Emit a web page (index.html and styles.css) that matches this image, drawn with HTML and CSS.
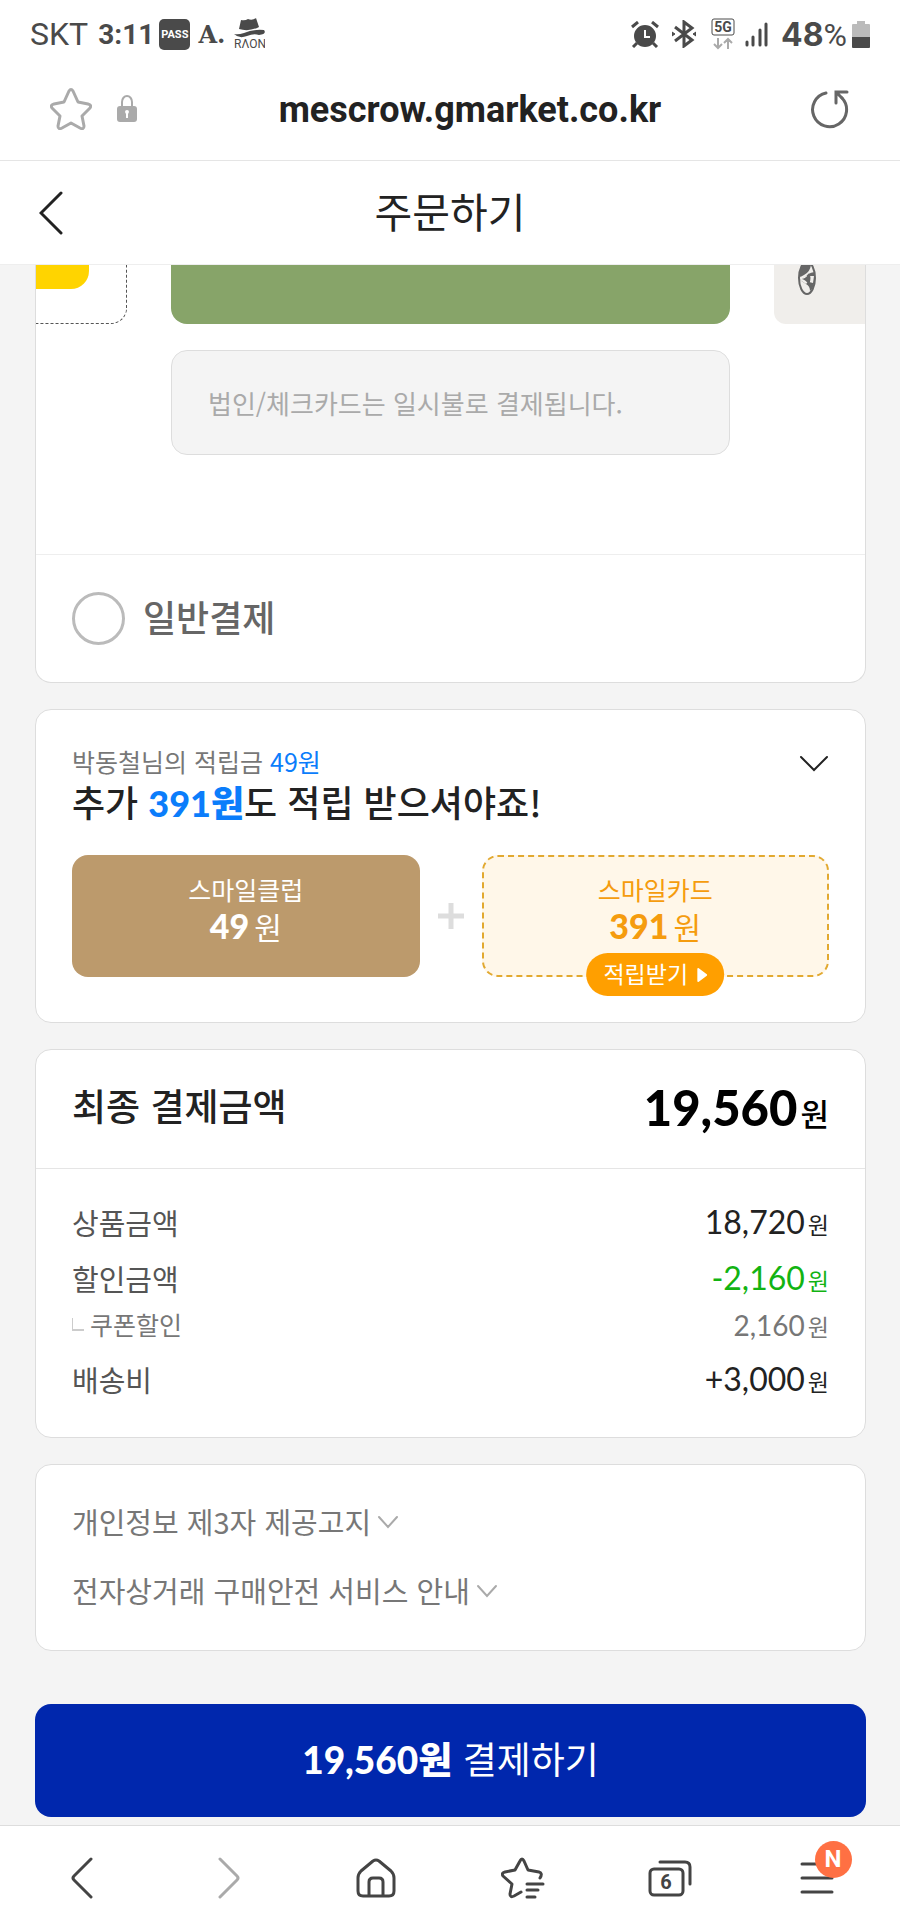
FILE: index.html
```html
<!DOCTYPE html>
<html lang="ko">

<head>
  <meta charset="utf-8">
  <meta name="viewport" content="width=device-width">
  <title>주문하기</title>
  <link rel="stylesheet" href="styles.css">
</head>
<body>
  <!-- 상태바 -->
  <div class="status">
    <span class="carrier">SKT</span>
    <span class="clock">3:11</span>
    <span class="pass">PASS</span>
    <span class="adot">A.</span>
    <svg class="raon" width="31" height="34" viewBox="0 0 31 34">
      <path fill="#4a4a4a" d="M7 3Q11 4 14 2Q18 4 22 1L25 10Q15 15 5 12ZM0 17Q4 18 10 16Q19 12 30 13Q33 17 25 18Q20 16 13 19Q5 22 0 17Z"/>
      <text x="0" y="31" font-family="Roboto" font-size="12" fill="#4a4a4a">RΛON</text>
    </svg>
    <div class="status-right">
      <svg width="28" height="27" viewBox="0 0 28 27" fill="none" stroke="#4a4a4a">
        <circle cx="14" cy="15" r="10" fill="#4a4a4a" stroke-width="2"/>
        <path d="M1 6L7 1M21 1l6 5M6 22l-4 4M22 22l4 4" stroke-width="3"/>
        <path d="M14 9v7h5" stroke="#fff" stroke-width="2"/>
      </svg>
      <svg class="bluetooth" width="24" height="28" viewBox="0 0 24 28" fill="none" stroke="#4a4a4a" stroke-width="3">
        <path d="M3 7l17 13-8 6V2l8 6L3 21"/>
        <path d="M0 12l3 2-3 2zM24 12l-3 2 3 2z" fill="#4a4a4a" stroke-width="1"/>
      </svg>
      <svg class="network" width="24" height="32" viewBox="0 0 24 32" fill="none">
        <rect x="1" y="1" width="22" height="16" rx="2" stroke="#4a4a4a"/>
        <text x="12" y="14" text-anchor="middle" font-family="Roboto" font-size="14" font-weight="700" fill="#4a4a4a">5G</text>
        <path d="M7 20v10M3 26l4 4 4-4M17 31V21M13 25l4-4 4 4" stroke="#aaa" stroke-width="2"/>
      </svg>
      <svg class="signal" width="23" height="25" viewBox="0 0 23 25" stroke="#4a4a4a" stroke-width="3" stroke-linecap="round">
        <path d="M2 20v3M8 15v8M15 8v15M21 2v21"/>
      </svg>
      <span class="percent"><b>48</b>%</span>
      <svg width="18" height="27" viewBox="0 0 18 27">
        <path fill="#bbb" d="M5 0h8v3h4q1 0 1 1v12H0V4q0-1 1-1h4z"/>
        <path fill="#4a4a4a" d="M0 16h18v10q0 1-1 1H1q-1 0-1-1z"/>
      </svg>
    </div>
  </div>

  <!-- 주소창 -->
  <div class="address">
    <button class="icon-btn" aria-label="북마크">
      <svg width="42" height="42" viewBox="0 0 42 42" fill="none" stroke="#aaa" stroke-width="3" stroke-linejoin="round">
        <path d="M19 3Q21 0 23 3L28 14L38 16Q42 17 40 20L32 28L34 38Q34 42 30 40L21 35L12 40Q8 42 8 38L10 28L2 20Q0 17 4 16L14 14Z"/>
      </svg>
    </button>
    <svg class="lock" width="20" height="28" viewBox="0 0 20 28">
      <path d="M5 13V7a5 6 0 0 1 10 0v6" fill="none" stroke="#aaa" stroke-width="2"/>
      <rect y="11" width="20" height="16" rx="3" fill="#aaa"/>
      <path d="M8 17a2 2 0 1 1 4 0l-1 2v4H9v-4z" fill="#fff"/>
    </svg>
    <span class="url">mescrow.gmarket.co.kr</span>
    <button class="icon-btn" aria-label="새로고침">
      <svg width="38" height="40" viewBox="0 0 38 40" fill="none" stroke="#666" stroke-width="3" stroke-linecap="round">
        <path d="M15 4A17 17 0 1 0 31 9"/>
        <path d="M25 14V3h11M26 4l5 5"/>
      </svg>
    </button>
  </div>

  <header class="header">
    <button class="icon-btn" aria-label="뒤로">
      <svg width="24" height="44" viewBox="0 0 24 44" fill="none" stroke="#222" stroke-width="3" stroke-linecap="round">
        <path d="M22 2L2 22l20 20"/>
      </svg>
    </button>
    <h1>주문하기</h1>
  </header>

  <main class="content">
    <!-- 결제수단 -->
    <section class="card pay">
      <div class="slider">
        <div class="slide add"><div class="plus-box"></div></div>
        <div class="slide green"></div>
        <div class="slide hyundai">
          <svg width="20" height="31" viewBox="0 0 20 31">
            <ellipse cx="10" cy="13" rx="8" ry="16" fill="none" stroke="#666" stroke-width="2"/>
            <path d="M6 0h8q-1 7-7 10-3 2-5 2 0-7 4-12zM3 15q3-1 7-5 4-3 8-3l-1 12q-1 5-4 7 0-5-4-7-3-2-6-4z" fill="#666"/>
            <path d="M3 15l7-5 1 7-2 2zM13 11h4l-1 7-4-1z" fill="#f0eeeb"/>
            <path d="M5 14q5-1 7-6 3 4 0 12-3-5-7-6z" fill="#666"/>
          </svg>
        </div>
      </div>
      <p class="notice">법인/체크카드는 일시불로 결제됩니다.</p>
      <label class="normal"><input type="radio" name="pay"><span>일반결제</span></label>
    </section>

    <!-- 적립 -->
    <section class="card saving">
      <div class="saving-head">
        <div>
          <p class="saving-sub">박동철님의 적립금 <span>49원</span></p>
          <h2>추가 <b>391원</b>도 적립 받으셔야죠!</h2>
        </div>
        <button class="icon-btn fold" aria-label="펼치기">
          <svg width="30" height="18" viewBox="0 0 30 18" fill="none" stroke="#222" stroke-width="2" stroke-linecap="round">
            <path d="M2 2l13 13L28 2"/>
          </svg>
        </button>
      </div>
      <div class="tiles">
        <div class="tile club">
          <span>스마일클럽</span>
          <span class="won"><b>49</b>원</span>
        </div>
        <svg class="plus" width="26" height="26" viewBox="0 0 26 26" stroke="#ddd" stroke-width="5">
          <path d="M13 0v26M0 13h26"/>
        </svg>
        <div class="tile smile">
          <span>스마일카드</span>
          <span class="won"><b>391</b>원</span>
          <button class="get"><span>적립받기</span>
            <svg width="10" height="14" viewBox="0 0 10 14"><path d="M1 1l8 6-8 6z" fill="#fff" stroke="#fff" stroke-width="2" stroke-linejoin="round"/></svg>
          </button>
        </div>
      </div>
    </section>

    <!-- 결제금액 -->
    <section class="card amount">
      <div class="total">
        <h2>최종 결제금액</h2>
        <p class="price"><b>19,560</b>원</p>
      </div>
      <dl class="list">
        <div class="row"><dt>상품금액</dt><dd class="price"><b>18,720</b>원</dd></div>
        <div class="row discount"><dt>할인금액</dt><dd class="price"><b>-2,160</b>원</dd></div>
        <div class="row coupon"><dt>쿠폰할인</dt><dd class="price"><b>2,160</b>원</dd></div>
        <div class="row"><dt>배송비</dt><dd class="price"><b>+3,000</b>원</dd></div>
      </dl>
    </section>

    <!-- 약관 -->
    <section class="card terms">
      <button class="term">개인정보 제3자 제공고지
        <svg width="22" height="14" viewBox="0 0 22 14" fill="none" stroke="#aaa" stroke-width="2" stroke-linecap="round"><path d="M2 2l9 10 9-10"/></svg>
      </button>
      <button class="term">전자상거래 구매안전 서비스 안내
        <svg width="22" height="14" viewBox="0 0 22 14" fill="none" stroke="#aaa" stroke-width="2" stroke-linecap="round"><path d="M2 2l9 10 9-10"/></svg>
      </button>
    </section>

    <button class="submit"><b>19,560원</b> 결제하기</button>
  </main>

  <!-- 하단 메뉴 -->
  <nav class="toolbar">
    <button class="icon-btn" aria-label="이전">
      <svg width="24" height="42" viewBox="0 0 24 42" fill="none" stroke="#444" stroke-width="3" stroke-linecap="round" stroke-linejoin="round">
        <path d="M21 2L4 19q-2 2 0 4l17 17"/>
      </svg>
    </button>
    <button class="icon-btn" aria-label="다음">
      <svg width="24" height="42" viewBox="0 0 24 42" fill="none" stroke="#aaa" stroke-width="3" stroke-linecap="round" stroke-linejoin="round">
        <path d="M3 2l17 17q2 2 0 4L3 40"/>
      </svg>
    </button>
    <button class="icon-btn" aria-label="홈">
      <svg width="40" height="40" viewBox="0 0 40 40" fill="none" stroke="#444" stroke-width="3" stroke-linejoin="round">
        <path d="M17 3q3-2 6 0l12 10q3 3 3 7v13q0 5-5 5H7q-5 0-5-5V20q0-4 3-7z"/>
        <path d="M13 38V24q0-4 4-4h6q4 0 4 4v14"/>
      </svg>
    </button>
    <button class="icon-btn" aria-label="북마크 목록">
      <svg width="44" height="42" viewBox="0 0 44 42" fill="none" stroke="#444" stroke-width="3" stroke-linecap="round" stroke-linejoin="round">
        <path d="M39 21q3-5-1-6l-11-2-4-9q-2-4-4 0l-5 9-10 2q-4 1-2 4l9 8-2 10q0 4 4 2l7-4"/>
        <path d="M26 27h16M26 33h11M26 40h8"/>
      </svg>
    </button>
    <button class="icon-btn" aria-label="탭 6개">
      <svg width="44" height="38" viewBox="0 0 44 38" fill="none" stroke="#444" stroke-width="3" stroke-linecap="round">
        <rect x="2" y="10" width="33" height="26" rx="4"/>
        <path d="M12 3h25q5 0 5 5v17"/>
        <text x="18" y="30" text-anchor="middle" font-family="Roboto" font-size="20" font-weight="700" fill="#444" stroke="none">6</text>
      </svg>
    </button>
    <button class="icon-btn menu" aria-label="메뉴">
      <svg width="34" height="32" viewBox="0 0 34 32" stroke="#444" stroke-width="3" stroke-linecap="round">
        <path d="M2 2h30M2 16h30M2 30h30"/>
      </svg>
      <span class="badge">N</span>
    </button>
  </nav>
</body>
</html>
```
FILE: styles.css
```css
* {
  box-sizing: border-box;
}
body {
  margin: 0;
  background: #fff;
  color: #222;
  font-family: "Noto Sans CJK KR", sans-serif;
}
h1, h2, p, dl, dd {
  margin: 0;
  font-weight: 400;
}
button {
  border: 0;
  padding: 0;
  background: none;
  color: inherit;
  font-family: inherit;
  cursor: pointer;
}
svg {
  display: block;
  flex: none;
}
.icon-btn {
  display: flex;
}

/*상태바*/
.status {
  display: flex;
  align-items: center;
  height: 68px;
  padding: 0 30px;
  font-family: Roboto, sans-serif;
  font-size: 32px;
  color: #4a4a4a;
}
.clock {
  margin-left: 10px;
  font-size: 28px;
  font-weight: 700;
}
.pass {
  margin-left: 5px;
  padding: 0 2px;
  border-radius: 5px;
  background: #4a4a4a;
  color: #fff;
  font-size: 11px;
  font-weight: 700;
  line-height: 31px;
}
.adot {
  margin: 0 9px 0 8px;
  font-family: "DejaVu Serif", serif;
  font-size: 24px;
  font-weight: 700;
}
.status-right {
  display: flex;
  align-items: center;
  margin-left: auto;
}
.bluetooth {
  margin-left: 13px;
}
.network {
  margin-left: 15px;
}
.signal {
  margin-left: 10px;
}
.percent {
  margin: 0 5px 0 13px;
}
.percent b {
  font-family: Inter, sans-serif;
}

/*주소창*/
.address {
  display: flex;
  align-items: center;
  height: 93px;
  padding: 0 51px 10px 50px;
  border-bottom: 1px solid #e5e5e5;
}
.lock {
  margin-left: 25px;
}
.url {
  flex: 1;
  padding: 2px 24px 0 16px;
  text-align: center;
  font-family: Roboto, sans-serif;
  font-size: 36px;
  font-weight: 700;
}

.header {
  display: grid;
  grid-template-columns: 24px 1fr 24px;
  align-items: center;
  height: 104px;
  padding: 0 39px;
  border-bottom: 1px solid #eee;
}
.header h1 {
  padding-bottom: 6px;
  text-align: center;
  font-size: 41px;
  line-height: 48px;
}

.content {
  padding: 0 34px 8px 35px;
  background: #f4f4f4;
}
.card {
  margin-bottom: 26px;
  border: 1px solid #ddd;
  border-radius: 16px;
  background: #fff;
}

/*결제수단*/
.pay {
  overflow: hidden;
  border-top: 0;
  border-radius: 0 0 16px 16px;
}
.slider {
  display: flex;
  gap: 44px;
  height: 59px;
}
.slide {
  flex: none;
  width: 91px;
}
.slide.add {
  border: 1px dashed #555;
  border-width: 0 1px 1px 0;
  border-radius: 0 0 16px 0;
}
.plus-box {
  width: 53px;
  height: 24px;
  border-radius: 0 0 18px 0;
  background: #ffd400;
}
.slide.green {
  flex: 1;
  border-radius: 0 0 16px 16px;
  background: #87a469;
}
.hyundai {
  padding-left: 23px;
  border-radius: 0 0 0 12px;
  background: #f0eeeb;
}
.notice {
  margin: 26px 135px 99px;
  padding: 34px 36px 33px;
  border: 1px solid #ddd;
  border-radius: 16px;
  background: #f4f4f4;
  color: #aaa;
  font-size: 26px;
  line-height: 36px;
}
.normal {
  display: flex;
  align-items: center;
  gap: 18px;
  height: 128px;
  padding: 0 36px;
  border-top: 1px solid #eee;
  color: #666;
  font-size: 36px;
  font-weight: 500;
  line-height: 48px;
}
.normal span {
  padding-bottom: 6px;
}
.normal input {
  appearance: none;
  width: 53px;
  height: 53px;
  margin: 0;
  border: 3px solid #bbb;
  border-radius: 50%;
}

/*적립*/
.saving {
  padding: 33px 36px 45px;
}
.saving-head {
  display: flex;
  justify-content: space-between;
}
.saving-sub {
  color: #777;
  font-size: 25px;
  line-height: 36px;
}
.saving-sub span {
  color: #0b7dfb;
}
.saving h2 {
  height: 44px;
  font-size: 36px;
  font-weight: 500;
  line-height: 44px;
}
.saving h2 b {
  color: #0b7dfb;
  font-family: Lato, "Noto Sans CJK KR", sans-serif;
  font-weight: 900;
}
.fold {
  align-self: flex-start;
  margin-top: 12px;
}
.tiles {
  display: flex;
  align-items: center;
  gap: 18px;
  margin-top: 32px;
}
.tile {
  position: relative;
  display: flex;
  flex: 1;
  flex-direction: column;
  align-items: center;
  height: 122px;
  padding: 15px 2px 0;
  border-radius: 16px;
  font-size: 25px;
  line-height: 38px;
}
.club {
  background: #bc9a6c;
  color: #fff;
}
.smile {
  padding: 13px 0 0;
  border: 2px dashed #e2a930;
  background: #fff7e9;
  color: #f59c0e;
}
.won {
  display: flex;
  align-items: baseline;
  gap: 5px;
  font-size: 30px;
  line-height: 36px;
}
.won b {
  font-family: Lato, sans-serif;
  font-size: 34px;
  font-weight: 900;
}
/*점선 테두리 위에 걸치는 버튼*/
.get {
  position: absolute;
  bottom: -21px;
  left: 50%;
  display: flex;
  align-items: center;
  gap: 9px;
  height: 43px;
  padding: 0 17px;
  border-radius: 22px;
  background: #ff9f00;
  color: #fff;
  font-size: 23px;
  line-height: 30px;
  white-space: nowrap;
  transform: translateX(-50%);
}
.get span {
  padding-bottom: 4px;
}

/*결제금액*/
.total {
  display: flex;
  align-items: center;
  justify-content: space-between;
  height: 119px;
  padding: 0 36px;
  border-bottom: 1px solid #e5e5e5;
}
.total h2 {
  padding-bottom: 8px;
  font-size: 37px;
  font-weight: 500;
  line-height: 48px;
}
.price {
  display: flex;
  align-items: baseline;
  gap: 3px;
  padding-top: 2px;
  font-size: 23px;
  line-height: 36px;
}
.price b {
  font-family: Lato, sans-serif;
  font-size: 32px;
  font-weight: 400;
}
.total .price {
  color: #000;
  font-size: 31px;
  font-weight: 500;
}
.total .price b {
  font-size: 49px;
  font-weight: 900;
}
.list {
  padding: 25px 36px 30px;
}
.row {
  display: flex;
  align-items: center;
  justify-content: space-between;
  height: 56px;
  line-height: 36px;
}
.row dt {
  color: #555;
  font-size: 29px;
}
.discount .price {
  color: #12b312;
}
.coupon {
  height: 36px;
  margin-bottom: 9px;
}
.coupon dt {
  display: flex;
  align-items: center;
  color: #777;
  font-size: 25px;
}
.coupon dt::before {
  content: "";
  width: 11px;
  height: 11px;
  margin-right: 6px;
  border: 1px solid #ccc;
  border-width: 0 0 2px 1px;
}
.coupon .price {
  color: #777;
}
.coupon .price b {
  font-size: 28px;
}

/*약관*/
.terms {
  margin-bottom: 53px;
  padding: 22px 36px 25px;
}
.term {
  display: flex;
  align-items: center;
  gap: 6px;
  color: #777;
  font-size: 29px;
  line-height: 69px;
}
.submit {
  display: block;
  width: 100%;
  height: 113px;
  padding-bottom: 6px;
  border-radius: 16px;
  background: #0027ad;
  color: #fff;
  font-size: 37px;
  font-weight: 400;
}
.submit b {
  font-family: Lato, "Noto Sans CJK KR", sans-serif;
  font-weight: 900;
}

/*하단 메뉴*/
.toolbar {
  display: grid;
  grid-template-columns: repeat(6, 1fr);
  place-items: center;
  height: 105px;
  padding: 0 10px 0 9px;
  border-top: 1px solid #ddd;
}
.menu {
  position: relative;
}
.badge {
  position: absolute;
  top: -21px;
  right: -18px;
  width: 37px;
  border-radius: 50%;
  background: #ff7043;
  color: #fff;
  font-family: Roboto, sans-serif;
  font-size: 24px;
  font-weight: 700;
  line-height: 37px;
}
```
